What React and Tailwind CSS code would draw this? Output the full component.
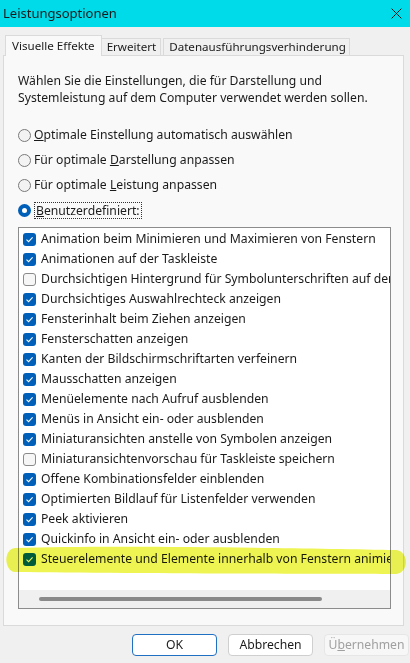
import React from "react";

const effects = [
  { label: "Animation beim Minimieren und Maximieren von Fenstern", on: true },
  { label: "Animationen auf der Taskleiste", on: true },
  { label: "Durchsichtigen Hintergrund für Symbolunterschriften auf dem Desktop", on: false },
  { label: "Durchsichtiges Auswahlrechteck anzeigen", on: true },
  { label: "Fensterinhalt beim Ziehen anzeigen", on: true },
  { label: "Fensterschatten anzeigen", on: true },
  { label: "Kanten der Bildschirmschriftarten verfeinern", on: true },
  { label: "Mausschatten anzeigen", on: true },
  { label: "Menüelemente nach Aufruf ausblenden", on: true },
  { label: "Menüs in Ansicht ein- oder ausblenden", on: true },
  { label: "Miniaturansichten anstelle von Symbolen anzeigen", on: true },
  { label: "Miniaturansichtenvorschau für Taskleiste speichern", on: false },
  { label: "Offene Kombinationsfelder einblenden", on: true },
  { label: "Optimierten Bildlauf für Listenfelder verwenden", on: true },
  { label: "Peek aktivieren", on: true },
  { label: "Quickinfo in Ansicht ein- oder ausblenden", on: true },
  { label: "Steuerelemente und Elemente innerhalb von Fenstern animieren", on: true },
];

const Checkbox = ({ on }) =>
  on ? (
    <span className="w-[13px] h-[13px] rounded-[3px] bg-[#005fb8] flex items-center justify-center shrink-0">
      <svg width="9" height="9" viewBox="0 0 9 9">
        <path d="M1.5 4.6 L3.6 6.6 L7.6 2.4" fill="none" stroke="#fff" strokeWidth="1.1" />
      </svg>
    </span>
  ) : (
    <span className="w-[13px] h-[13px] rounded-[3px] border border-[#8a8a8a] bg-[#f6f6f6] shrink-0" />
  );

const Radio = ({ selected, children }) => (
  <div className="h-[25px] flex items-center gap-[3px]">
    {selected ? (
      <span className="w-[13px] h-[13px] rounded-full bg-[#005fb8] flex items-center justify-center">
        <span className="w-[5px] h-[5px] rounded-full bg-white" />
      </span>
    ) : (
      <span className="w-[13px] h-[13px] rounded-full border border-[#7a7a7a] bg-[#f3f3f3]" />
    )}
    {children}
  </div>
);

const App = () => {
  return (
    <div className="relative w-[410px] h-[663px] overflow-hidden bg-[#f0f0f0] text-[#1a1a1a] flex flex-col font-['Noto_Sans',sans-serif] text-[12.2px]">
      {/* title bar */}
      <div className="h-[27px] bg-[#00dbea] flex items-center justify-between pl-[3px] pr-[8px]">
        <span className="text-[13px]">Leistungsoptionen</span>
        <svg width="11" height="11" viewBox="0 0 11 11">
          <path d="M0.5 0.5 L10.5 10.5 M10.5 0.5 L0.5 10.5" stroke="#1a1a1a" strokeWidth="1" />
        </svg>
      </div>

      {/* tabs */}
      <div className="h-[28px] flex items-end pl-[5px] text-[11.6px]">
        <div className="h-[21px] pl-[6px] pr-[6px] bg-[#f9f9f9] border border-b-0 border-[#dadada] flex items-center relative top-[1px]">
          Visuelle Effekte
        </div>
        <div className="h-[17px] pl-[5px] pr-[4px] bg-[#f0f0f0] border border-b-0 border-l-0 border-[#dadada] flex items-center">
          Erweitert
        </div>
        <div className="h-[17px] ml-[2px] pl-[5px] pr-[3px] bg-[#f0f0f0] border border-b-0 border-[#dadada] flex items-center">
          Datenausführungsverhinderung
        </div>
      </div>

      {/* panel */}
      <div className="ml-[3px] mr-[6px] h-[571px] bg-[#f9f9f9] border border-[#dadada] pl-[14px] pr-[12px] pt-[16px] flex flex-col">
        <p className="leading-[17px]">
          Wählen Sie die Einstellungen, die für Darstellung und
          <br />
          Systemleistung auf dem Computer verwendet werden sollen.
        </p>

        <div className="mt-[17px] flex flex-col">
          <Radio>
            <span>
              <span className="underline">O</span>ptimale Einstellung automatisch auswählen
            </span>
          </Radio>
          <Radio>
            <span>
              Für optimale <span className="underline">D</span>arstellung anpassen
            </span>
          </Radio>
          <Radio>
            <span>
              Für optimale <span className="underline">L</span>eistung anpassen
            </span>
          </Radio>
          <Radio selected>
            <span className="border border-dotted border-[#333] px-[1px] leading-[15px]">
              <span className="underline">B</span>enutzerdefiniert:
            </span>
          </Radio>
        </div>

        <div className="mt-[4px] h-[382px] border border-[#8c8c8c] bg-white flex flex-col overflow-hidden">
          <div className="flex-1 pt-[1px] pl-[4px] overflow-hidden">
            {effects.map((e) => (
              <div key={e.label} className="h-[20px] flex items-center gap-[5px] whitespace-nowrap">
                <Checkbox on={e.on} />
                <span>{e.label}</span>
              </div>
            ))}
          </div>
          <div className="h-[18px] bg-[#f0f0f0] flex items-center pl-[20px]">
            <div className="w-[283px] h-[4px] rounded-full bg-[#8a8a8a]" />
          </div>
        </div>
      </div>

      {/* buttons */}
      <div className="flex-1 flex items-center gap-[11px] pl-[132px] pt-[1px]">
        <button className="w-[85px] h-[22px] shrink-0 rounded-[4px] border border-[#1f6fc2] bg-white">
          OK
        </button>
        <button className="w-[85px] h-[22px] shrink-0 rounded-[4px] border border-[#cfcfcf] bg-white">
          Abbrechen
        </button>
        <button className="w-[85px] h-[22px] shrink-0 rounded-[4px] border border-[#e6e6e6] bg-[#f7f7f7] text-[#a0a0a0]">
          Ü<span className="underline">b</span>ernehmen
        </button>
      </div>

      {/* marker highlight */}
      <svg className="absolute left-0 top-0 mix-blend-multiply pointer-events-none" width="410" height="663">
        <path
          d="M15 548 C 110 545, 300 548, 396 550 C 409 551, 409 573, 396 574 C 300 574, 110 573, 15 572 C 4 571, 3 549, 15 548 Z"
          fill="#eef552"
        />
      </svg>
    </div>
  );
};

export default App;
